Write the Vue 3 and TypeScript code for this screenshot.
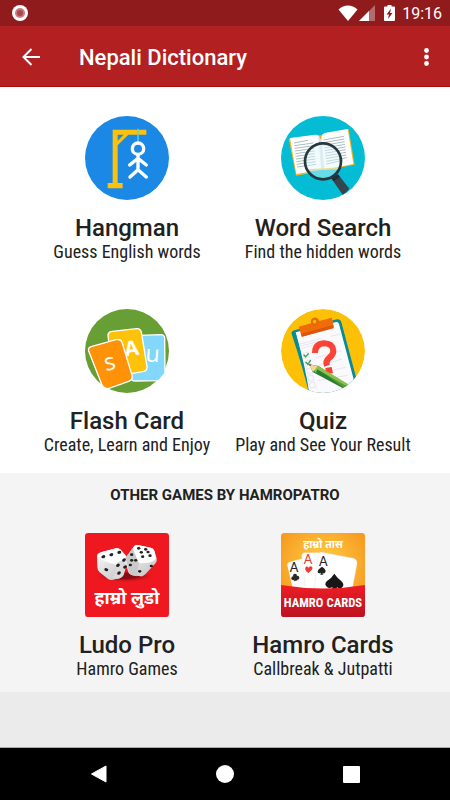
<script setup lang="ts">
import { ref } from 'vue'

type IconName = 'hangman' | 'search' | 'cards' | 'quiz' | 'ludo' | 'hamro'

interface Game {
  title: string
  subtitle: string
  icon: IconName
}

const games: Game[] = [
  { title: 'Hangman', subtitle: 'Guess English words', icon: 'hangman' },
  { title: 'Word Search', subtitle: 'Find the hidden words', icon: 'search' },
  { title: 'Flash Card', subtitle: 'Create, Learn and Enjoy', icon: 'cards' },
  { title: 'Quiz', subtitle: 'Play and See Your Result', icon: 'quiz' },
]

const otherGames: Game[] = [
  { title: 'Ludo Pro', subtitle: 'Hamro Games', icon: 'ludo' },
  { title: 'Hamro Cards', subtitle: 'Callbreak & Jutpatti', icon: 'hamro' },
]

const sections = [
  { id: 'games', heading: '', items: games },
  { id: 'other', heading: 'OTHER GAMES BY HAMROPATRO', items: otherGames },
]

const selected = ref<string | null>(null)
</script>

<template>
  <div class="screen">
    <div class="status">
      <svg class="record" viewBox="0 0 16 16" aria-hidden="true">
        <circle cx="8" cy="8" r="8" fill="#fff" />
        <circle cx="8" cy="8" r="5" fill="#c97a7e" />
        <circle cx="8" cy="8" r="3" fill="#a8484c" />
      </svg>
      <div class="status-right">
        <svg class="wifi" viewBox="0 0 20 16" aria-hidden="true">
          <path d="M.5 4.500C6-.8 14-.8 19.500 4.500L10 16z" fill="#fff" />
        </svg>
        <svg class="signal" viewBox="0 0 16 16" aria-hidden="true">
          <path d="M16 0V16H0z" fill="#fff" opacity=".35" />
          <path d="M10 6V16H0z" fill="#fff" />
        </svg>
        <svg class="battery" viewBox="0 0 11 16" aria-hidden="true">
          <path d="M3.500 0h4v1.500H10a1 1 0 0 1 1 1V15a1 1 0 0 1-1 1H1a1 1 0 0 1-1-1V2.500a1 1 0 0 1 1-1h2.500z" fill="#fff" />
          <path d="M7 3.500 2.500 9.500H5L4 14l4.500-6H6z" fill="#901b1d" />
        </svg>
        <span class="clock">19:16</span>
      </div>
    </div>

    <header class="bar">
      <button class="icon-button" type="button" aria-label="Back">
        <svg class="back" viewBox="0 0 18 18" aria-hidden="true">
          <path d="M18 9H1.500M9.500 1 1.500 9l8 8" fill="none" stroke="#fff" stroke-width="2" />
        </svg>
      </button>
      <h1>Nepali Dictionary</h1>
      <button class="icon-button" type="button" aria-label="More options">
        <svg class="more" viewBox="0 0 5 18" aria-hidden="true">
          <circle v-for="y in [2.500, 9, 15.500]" :key="y" cx="2.500" :cy="y" r="2.400" fill="#fff" />
        </svg>
      </button>
    </header>

    <main>
      <section v-for="section in sections" :key="section.id" :class="section.id">
        <h2 v-if="section.heading">{{ section.heading }}</h2>
        <div class="grid">
          <button v-for="game in section.items" :key="game.title" class="tile" type="button" @click="selected = game.title">
            <svg v-if="game.icon === 'hangman'" class="art" viewBox="29 31 252 252" aria-hidden="true">
              <circle cx="155" cy="157" r="126" fill="#1b88e6" />
              <path d="M112 72H213V87H159L127 119V232H142V248H97V232H112zM127 87V105L145 87z" fill="#fbc10d" fill-rule="evenodd" />
              <path d="M188 69V110" stroke="#5fd5dc" stroke-width="4" />
              <g fill="none" stroke="#fff" stroke-linecap="round" stroke-linejoin="round">
                <circle cx="188" cy="129" r="17" stroke-width="10" />
                <path d="M188 149V190M163 178 188 158 213 178M164 214 188 192 213 214" stroke-width="10" />
              </g>
            </svg>

            <svg v-else-if="game.icon === 'search'" class="art" viewBox="34 31 252 252" aria-hidden="true">
              <circle cx="160" cy="157" r="126" fill="#04bdd5" />
              <path d="M57 99 143 88l9 2 85-20 18 107-82 16-94 17z" fill="#f5b51b" />
              <path d="M61 97 137 87q12-1 15 10 5-13 16-16l66-11 17 105-75 15q-8 2-11 7-5-4-14-3l-71 11z" fill="#fff" />
              <path d="M146 96q4-10 10-2l8 98-9 4z" fill="#dce2e5" />
              <path d="M140 90q10-4 12 12 2-8 5-13l-6-2z" fill="#eba61b" />
              <g stroke="#819ba5" stroke-width="2">
                <path v-for="n in 10" :key="n" :d="`M${72 + n} ${104 + n * 8}l${n === 1 ? 42 : 57}-8M${160 + n} ${95 + n * 8}l${n === 10 ? 48 : 62}-11`" />
              </g>
              <circle cx="160" cy="167" r="53" fill="#def8fb" fill-opacity=".45" />
              <path d="M114 195 204 190Q192 214 163 217 132 217 114 195z" fill="#69dce9" />
              <path d="M112 193 205 188" stroke="#eadb9c" stroke-width="5" />
              <circle cx="160" cy="167" r="54" fill="none" stroke="#263840" stroke-width="8" />
              <path d="m185 218 20-12 34 43q-9 12-20 18z" fill="#34454d" />
              <path d="m185 218 20-12 6 8-20 13z" fill="#1e3038" />
            </svg>

            <svg v-else-if="game.icon === 'cards'" class="art" viewBox="29 31 252 252" aria-hidden="true">
              <circle cx="155" cy="157" r="126" fill="#689f35" />
              <path d="M191 110 257 108q11 0 11 12L269 224 250 246 180 247q-13 0-13-13l8-114z" fill="#82d7fb" stroke="#fff" stroke-width="4" />
              <text class="card-letter" x="231" y="189" font-size="70" transform="rotate(4 231 178)">u</text>
              <path d="M110 98 184 90q11-1 14 10l17 103q2 12-10 15l-82 15q-8 2-10-9L98 112q-1-12 12-14z" fill="#ffc20b" stroke="#fff" stroke-width="4" />
              <text class="card-letter strong" x="169" y="171" font-size="62" transform="rotate(-8 169 150)">A</text>
              <path d="M50 143 122 123q14-3 18 8l30 99q3 13-10 18L99 270q-13 0-20-13L40 157q-3-11 10-14z" fill="#ff9208" stroke="#fff" stroke-width="4" />
              <text class="card-letter" x="104" y="214" font-size="70" transform="rotate(-12 104 195)">s</text>
            </svg>

            <svg v-else-if="game.icon === 'quiz'" class="art" viewBox="34 31 252 252" aria-hidden="true">
              <defs><clipPath id="quiz-disc"><circle cx="160" cy="157" r="126" /></clipPath></defs>
              <g clip-path="url(#quiz-disc)">
                <circle cx="160" cy="157" r="126" fill="#fcc006" />
                <path d="M74 95 202 62q10-2 13 8l47 176-51 43-90 8Q105 224 66 106q-3-8 8-11z" fill="#078b98" />
                <path d="M78 101 200 70q6-1 8 6l47 177-45 36-90 4Q110 214 78 101z" fill="#fafafd" />
                <g stroke="#dcdee8" stroke-width="2">
                  <path d="M91 136l63-17M94 142l63-17M96 149l34-9M184 113l31-8M138 178l78-22M141 202l77-21M143 224l86-18M145 246l89-16" />
                </g>
                <g fill="none" stroke="#d9dbe5" stroke-width="2">
                  <path d="m100 164 15-4 4 15-15 4zM106 188l15-4 4 15-15 4zM111 211l15-4 4 15-15 4zM114 233l15-4 4 15-15 4zM119 254l15-4 4 15-15 4z" />
                </g>
                <path d="m102 168 6 6 9-10M108 190l7 7 8-13" fill="none" stroke="#3d9b47" stroke-width="4" />
                <path d="m87 84 37-10q-2-13 8-17 11-3 17 10l37-10q5 13 6 29l-96 28z" fill="#ef6c06" />
                <path d="m94 105 97-26 1 10-95 25z" fill="#dc5608" />
                <circle cx="135" cy="69" r="8" fill="#f9b806" stroke="#e36809" stroke-width="5" />
                <path d="M136 163q0-27 27-29 26 0 28 22 0 13-14 23-10 8-5 22" fill="none" stroke="#fb4437" stroke-width="18" />
                <path d="m167 208 19-3 4 19-20 1z" fill="#f44336" />
                <path d="m119 197 26 5 90 56q-3 13-15 11l-91-49z" fill="#2c7d34" />
                <path d="m137 204 9-2 90 57-8 13z" fill="#569c36" />
                <path d="m132 213 13-11 91 55-4 6-90-51-3 12z" fill="#8bc34a" />
                <path d="m117 196 27 7-14 17z" fill="#f6d4a0" />
                <path d="m117 196 8 2-4 5z" fill="#38494b" />
              </g>
            </svg>

            <svg v-else-if="game.icon === 'ludo'" class="art" viewBox="29 22 252 252" aria-hidden="true">
              <defs>
                <linearGradient id="die-face" x1="0" y1="0" x2=".7" y2="1">
                  <stop offset="0" stop-color="#fff" />
                  <stop offset="1" stop-color="#c8c8c8" />
                </linearGradient>
                <radialGradient id="die-shadow">
                  <stop offset=".4" stop-color="#8b0b10" />
                  <stop offset="1" stop-color="#f01820" stop-opacity="0" />
                </radialGradient>
              </defs>
              <rect x="29" y="22" width="252" height="252" rx="10" fill="#f01820" />
              <ellipse cx="148" cy="151" rx="95" ry="20" fill="url(#die-shadow)" />
              <path d="M76 80 122 68q9-2 14 4l15 17q7 9 4 20l-9 36q-2 8-10 11l-25 7q-8 1-14-4l-24-19q-7-6-7-15l-1-32q0-10 11-13z" fill="url(#die-face)" />
              <path d="M68 91q4-10 12-12l42-11q9-2 14 4l17 21q-7 11-19 14-8 3-12 10-18-5-34-10-14-5-20-16z" fill="#fff" />
              <path d="m122 117 13-10 20-11q2 8 0 15l-11 38q-3 8-14 10-15 2-19-4 12-12 11-38z" fill="#dadada" />
              <path d="M176 62q5-5 11-4l39 8q8 2 11 9l7 23q2 8-3 14l-31 34q-7 7-14 6l-25-3q-9-1-12-9l-9-31q-2-10 5-16z" fill="url(#die-face)" />
              <path d="M176 62q5-5 11-4l39 8q8 2 11 9l5 24q-12 12-26 12l-25 2q-14-14-20-38z" fill="#fff" />
              <path d="m151 95 21-28q7 18 19 46-4 18-7 39l-14-3q-6-1-9-9z" fill="#c9c9c9" />
              <g fill="#222">
                <ellipse v-for="[x, y, r] in [[84, 93, -10], [108, 87, -10], [132, 80, -10], [93, 132, 10], [146, 103, -35], [128, 119, -35], [149, 124, -30], [131, 142, -35]]" :key="`l${x}`" :cx="x" :cy="y" rx="6" ry="4.500" :transform="`rotate(${r} ${x} ${y})`" />
                <ellipse v-for="[x, y] in [[190, 68], [211, 71], [198, 80], [218, 79], [202, 93], [224, 90], [169, 87], [169, 104], [181, 104], [165, 118], [193, 137], [228, 121]]" :key="`r${x}-${y}`" :cx="x" :cy="y" rx="5" ry="4" />
              </g>
              <text class="nepali" x="155" y="235" font-size="53">हाम्रो लुडो</text>
            </svg>

            <svg v-else class="art" viewBox="34 22 252 252" aria-hidden="true">
              <defs>
                <radialGradient id="sun" cx=".5" cy=".4" r=".65">
                  <stop offset="0" stop-color="#ffd447" />
                  <stop offset="1" stop-color="#f6951e" />
                </radialGradient>
                <linearGradient id="banner" x1="0" y1="0" x2="0" y2="1">
                  <stop offset="0" stop-color="#ee1d24" />
                  <stop offset="1" stop-color="#bd1221" />
                </linearGradient>
              </defs>
              <rect x="34" y="22" width="252" height="252" rx="10" fill="url(#sun)" />
              <text class="nepali" x="160" y="66" font-size="32">हाम्रो तास</text>
              <path d="M62 108 101 98 147 213H75L53 119q-1-9 9-11z" fill="#fafafa" />
              <path d="M105 81h60v119h-55L96 91q0-9 9-10z" fill="#fff" stroke="#e5dfd4" />
              <path d="m156 80 92 17q16 3 14 18l-17 90H132L145 91q1-11 11-11z" fill="#fff" stroke="#ded8cf" />
              <text class="ace" x="73" y="138" font-size="38">A</text>
              <text class="ace red" x="115" y="114" font-size="38">A</text>
              <text class="ace" x="161" y="121" font-size="38">A</text>
              <g fill="#292929"><circle cx="76" cy="150" r="6" /><circle cx="71" cy="158" r="6" /><circle cx="83" cy="156" r="6" /><path d="m77 152 7 12-11 3z" /></g>
              <path d="M116 142q-12-9-9-16 4-7 10 0 6-8 11-1 3 7-12 17z" fill="#e53e32" />
              <path d="M157 123q14 9 10 17-4 6-9 1l3 6h-9l2-6q-7 4-10-2-1-7 13-16z" fill="#222" />
              <path d="M194 144q8 12 20 21 11 10 5 18-7 9-18 1l4 12h-21l5-13q-9 7-17 1-10-8 0-18 14-9 22-22z" fill="#171717" />
              <path d="M34 178Q160 199 286 178V264q0 10-10 10H44q-10 0-10-10z" fill="url(#banner)" />
              <text class="brand" x="160" y="244" font-size="38">HAMRO CARDS</text>
            </svg>

            <span class="title">{{ game.title }}</span>
            <span class="subtitle">{{ game.subtitle }}</span>
          </button>
        </div>
      </section>
    </main>

    <nav class="system">
      <button type="button" aria-label="System back">
        <svg viewBox="0 0 18 18" aria-hidden="true"><path d="M1.500 9 16 1V17z" fill="#fff" stroke="#fff" stroke-linejoin="round" /></svg>
      </button>
      <button type="button" aria-label="Home">
        <svg viewBox="0 0 18 18" aria-hidden="true"><circle cx="9" cy="9" r="9" fill="#fff" /></svg>
      </button>
      <button type="button" aria-label="Recent apps">
        <svg viewBox="0 0 18 18" aria-hidden="true"><rect x="1" y="1" width="17" height="17" rx="1" fill="#fff" /></svg>
      </button>
    </nav>
  </div>
</template>

<style>
body {
  margin: 0;
}
</style>

<style scoped>
.screen {
  display: flex;
  flex-direction: column;
  min-height: 100vh;
  background: #ebebeb;
  color: #212121;
  font-family: Roboto, "Noto Sans", sans-serif;
}

button {
  padding: 0;
  border: 0;
  background: none;
  color: inherit;
  font: inherit;
  cursor: pointer;
}

svg {
  display: block;
}

.status {
  display: flex;
  align-items: center;
  justify-content: space-between;
  height: 26px;
  padding: 0 8px 0 12px;
  background: #901b1d;
}

.record {
  width: 16px;
  height: 16px;
}

.status-right {
  display: flex;
  align-items: center;
}

.wifi {
  width: 20px;
  height: 16px;
  margin-right: 1px;
}

.signal {
  width: 16px;
  height: 16px;
  margin-right: 9px;
}

.battery {
  width: 11px;
  height: 16px;
  margin-right: 7px;
}

.clock {
  padding-top: 2px;
  color: #fff;
  font-size: 16px;
  line-height: 20px;
}

.bar {
  display: flex;
  align-items: center;
  height: 61px;
  background: #b22021;
  box-shadow: inset 0 -1px #a90d0f;
}

.icon-button {
  display: flex;
  align-items: center;
  justify-content: center;
  width: 48px;
  height: 48px;
}

.icon-button:first-child {
  width: 62px;
}

.back {
  width: 18px;
  height: 18px;
}

.more {
  width: 5px;
  height: 18px;
}

h1 {
  flex: 1;
  margin: 0;
  padding: 2px 0 0 17px;
  color: #fff;
  font-size: 22px;
  font-weight: 500;
  line-height: 28px;
}

main {
  flex: 1;
}

.games {
  background: #fff;
}

.other {
  background: #f4f4f4;
}

h2 {
  margin: 0;
  font-size: 15px;
  font-weight: 700;
  line-height: 44px;
  text-align: center;
}

.grid {
  display: grid;
  grid-template-columns: 1fr 1fr;
  padding: 0 29px;
}

.tile {
  display: flex;
  flex-direction: column;
  align-items: center;
  padding: 29px 0 18px;
}

.other .tile {
  padding: 16px 0 13px;
}

.art {
  width: 84px;
  height: 84px;
  margin-bottom: 14px;
}

.title {
  font-size: 24px;
  font-weight: 500;
  line-height: 28px;
  white-space: nowrap;
}

.subtitle {
  font-family: "Roboto Condensed", Roboto, sans-serif;
  font-size: 18px;
  line-height: 20px;
  white-space: nowrap;
}

.card-letter {
  fill: #fff;
  font-family: "Open Sans", sans-serif;
  text-anchor: middle;
}

.card-letter.strong {
  font-weight: 700;
}

.nepali {
  fill: #fff;
  font-family: "Noto Sans Devanagari", "Noto Sans", sans-serif;
  font-weight: 700;
  text-anchor: middle;
}

.ace {
  fill: #222;
  font-family: Lato, sans-serif;
  text-anchor: middle;
}

.ace.red {
  fill: #e53e32;
}

.brand {
  fill: #fff;
  font-family: "Roboto Condensed", Roboto, sans-serif;
  font-weight: 700;
  text-anchor: middle;
}

.system {
  display: flex;
  justify-content: center;
  gap: 78px;
  height: 52px;
  background: #000;
  box-shadow: 0 -1px #a9a9a9;
}

.system button {
  display: flex;
  align-items: center;
  justify-content: center;
  width: 48px;
}

.system svg {
  width: 18px;
  height: 18px;
}
</style>
